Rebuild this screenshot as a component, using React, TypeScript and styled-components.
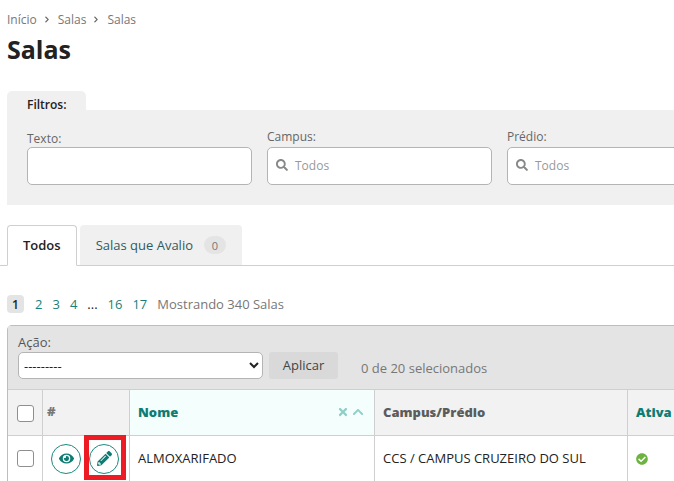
import styled, { createGlobalStyle } from 'styled-components';
import { FaCheckCircle, FaChevronRight, FaChevronUp, FaEye, FaPencilAlt, FaSearch, FaTimes } from 'react-icons/fa';

const GlobalStyle = createGlobalStyle`
  html, body {
    margin: 0;
    height: 481px;
    overflow: hidden;
    background: #fff;
  }
  *, *::before, *::after {
    box-sizing: border-box;
  }
`;

const Page = styled.div`
  width: 1000px;
  padding: 12px 0 0 7px;
  font-family: "Open Sans", sans-serif;
  font-size: 13px;
  color: #222;
`;

const Breadcrumb = styled.nav`
  display: flex;
  align-items: center;
  height: 14px;
  color: #777;
  font-size: 12px;
  svg {
    width: 6px;
    height: 7px;
    margin: 0 8px 0 7px;
    color: #666;
  }
`;

const Title = styled.h1`
  margin: 5px 0 0;
  height: 60px;
  font-size: 25px;
  line-height: 36px;
  font-weight: 700;
  color: #222;
`;

const FilterTab = styled.div`
  width: 79px;
  height: 19px;
  padding: 5px 0 0 20px;
  background: #f0f0f0;
  border-radius: 5px 5px 0 0;
  font-size: 12px;
  line-height: 17px;
  font-weight: 600;
`;

const FilterPanel = styled.div`
  display: flex;
  gap: 15px;
  height: 95px;
  padding: 19px 0 0 20px;
  background: #f0f0f0;
`;

const Field = styled.div`
  display: flex;
  flex-direction: column;
  justify-content: flex-end;
  width: 225px;
  height: 56px;
`;

const FieldLabel = styled.label<{ $low?: boolean }>`
  color: #666;
  font-size: 12px;
  line-height: 16px;
  margin-bottom: ${p => (p.$low ? 0 : 2)}px;
`;

const TextBox = styled.div`
  display: flex;
  align-items: center;
  gap: 7px;
  height: 38px;
  padding: 0 0 2px 8px;
  background: #fff;
  border: 1px solid #b4b4b4;
  border-radius: 5px;
  color: #999;
  font-size: 12px;
  svg {
    width: 12px;
    height: 12px;
    color: #888;
  }
`;

const Tabs = styled.div`
  display: flex;
  gap: 3px;
  height: 41px;
  margin: 20px 0 0 -7px;
  padding-left: 7px;
  border-bottom: 1px solid #cfcfcf;
`;

const Tab = styled.div<{ $active?: boolean }>`
  display: flex;
  align-items: center;
  gap: 11px;
  height: ${p => (p.$active ? 41 : 40)}px;
  padding: 0 ${p => (p.$active ? 15 : 16)}px ${p => (p.$active ? 2 : 0)}px;
  background: ${p => (p.$active ? '#fff' : '#f0f0f0')};
  border: ${p => (p.$active ? '1px solid #cfcfcf' : 'none')};
  border-bottom: ${p => (p.$active ? '1px solid #fff' : 'none')};
  border-radius: 4px 4px 0 0;
  color: ${p => (p.$active ? '#222' : '#33595c')};
  font-weight: ${p => (p.$active ? 600 : 400)};
  font-size: 13px;
`;

const Count = styled.span`
  display: flex;
  align-items: center;
  justify-content: center;
  width: 22px;
  height: 18px;
  background: #e4e4e4;
  border-radius: 9px;
  color: #777;
  font-size: 11px;
`;

const Pagination = styled.div`
  display: flex;
  align-items: center;
  height: 18px;
  margin-top: 29px;
  gap: 10px;
  font-size: 13px;
`;

const CurrentPage = styled.span`
  display: flex;
  align-items: center;
  justify-content: center;
  width: 17px;
  height: 18px;
  margin-right: 1px;
  background: #e4e4e4;
  border-radius: 4px;
  font-weight: 600;
  font-size: 12px;
`;

const PageLink = styled.a`
  color: #1b7f79;
`;

const Summary = styled.span`
  color: #777;
`;

const TableBox = styled.div`
  margin-top: 12px;
  border: 1px solid #bdbdbd;
  border-bottom: none;
  border-right: none;
  border-radius: 5px 0 0 0;
`;

const Toolbar = styled.div`
  display: flex;
  align-items: flex-end;
  height: 64px;
  padding: 0 0 10px 10px;
  background: #e4e4e4;
  border-bottom: 1px solid #cfcfcf;
`;

const ActionGroup = styled.div`
  display: flex;
  flex-direction: column;
  width: 245px;
`;

const ActionLabel = styled.label`
  color: #555;
  font-size: 13px;
  line-height: 16px;
  margin-bottom: 2px;
`;

const ActionSelect = styled.select`
  width: 245px;
  height: 27px;
  padding-left: 1px;
  background: #fff;
  border: 1px solid #b4b4b4;
  border-radius: 5px;
  font-family: "Open Sans", sans-serif;
  font-size: 13px;
  color: #222;
`;

const ApplyButton = styled.button`
  width: 69px;
  height: 27px;
  margin-left: 6px;
  padding: 0 0 2px;
  background: #d9d9d9;
  border: none;
  border-radius: 3px;
  font-family: "Open Sans", sans-serif;
  font-size: 13px;
  color: #444;
`;

const Selected = styled.span`
  margin: 0 0 2px 23px;
  color: #777;
  font-size: 13px;
  line-height: 18px;
`;

const Row = styled.div<{ $header?: boolean }>`
  display: grid;
  grid-template-columns: 35px 87px 245px 253px 1fr;
  height: 46px;
  background: ${p => (p.$header ? '#f2f2f2' : '#fff')};
  border-bottom: 1px solid #cfcfcf;
`;

const Cell = styled.div<{ $sorted?: boolean }>`
  display: flex;
  align-items: center;
  padding: 0 8px 2px;
  border-right: 1px solid #cfcfcf;
  background: ${p => (p.$sorted ? '#f4fefd' : 'transparent')};
`;

const CheckCell = styled(Cell)`
  justify-content: center;
  padding: 0;
`;

const ActionsCell = styled(Cell)`
  gap: 8px;
  padding: 0 0 0 8px;
`;

const Box = styled.span<{ $low?: boolean }>`
  width: 17px;
  height: 17px;
  margin-top: ${p => (p.$low ? 2 : 0)}px;
  background: #fff;
  border: 1px solid #8f8f8f;
  border-radius: 3px;
`;

const HeadText = styled.span<{ $green?: boolean }>`
  color: ${p => (p.$green ? '#0f7c73' : '#5c5c5c')};
  font-weight: 800;
  font-size: 13px;
`;

const Hash = styled(HeadText)`
  margin-left: -4px;
  margin-top: -1px;
  color: #777;
`;

const SortIcons = styled.span`
  display: flex;
  align-items: center;
  gap: 3px;
  margin-left: auto;
  margin-right: 2px;
  color: #8ecfc8;
  svg {
    width: 12px;
    height: 12px;
  }
`;

const RoundButton = styled.span`
  display: flex;
  align-items: center;
  justify-content: center;
  width: 30px;
  height: 30px;
  border: 1px solid #1b8a80;
  border-radius: 50%;
  color: #0f7c73;
  svg {
    width: 15px;
    height: 15px;
  }
`;

const Highlighted = styled.span`
  position: relative;
  &::after {
    content: '';
    position: absolute;
    top: -9px;
    left: -5px;
    width: 42px;
    height: 45px;
    border: 5px solid #ed1c24;
  }
`;

const ActiveIcon = styled(FaCheckCircle)`
  width: 12px;
  height: 12px;
  margin-top: 3px;
  color: #6cb33f;
`;

export default function App() {
  return (
    <Page>
      <GlobalStyle />
      <Breadcrumb>
        Início<FaChevronRight />Salas<FaChevronRight />Salas
      </Breadcrumb>
      <Title>Salas</Title>

      <FilterTab>Filtros:</FilterTab>
      <FilterPanel>
        <Field>
          <FieldLabel $low>Texto:</FieldLabel>
          <TextBox />
        </Field>
        <Field>
          <FieldLabel>Campus:</FieldLabel>
          <TextBox><FaSearch />Todos</TextBox>
        </Field>
        <Field>
          <FieldLabel>Prédio:</FieldLabel>
          <TextBox><FaSearch />Todos</TextBox>
        </Field>
      </FilterPanel>

      <Tabs>
        <Tab $active>Todos</Tab>
        <Tab>Salas que Avalio <Count>0</Count></Tab>
      </Tabs>

      <Pagination>
        <CurrentPage>1</CurrentPage>
        <PageLink>2</PageLink>
        <PageLink>3</PageLink>
        <PageLink>4</PageLink>
        <span>...</span>
        <PageLink>16</PageLink>
        <PageLink>17</PageLink>
        <Summary>Mostrando 340 Salas</Summary>
      </Pagination>

      <TableBox>
        <Toolbar>
          <ActionGroup>
            <ActionLabel>Ação:</ActionLabel>
            <ActionSelect>
              <option>---------</option>
            </ActionSelect>
          </ActionGroup>
          <ApplyButton>Aplicar</ApplyButton>
          <Selected>0 de 20 selecionados</Selected>
        </Toolbar>
        <Row $header>
          <CheckCell><Box $low /></CheckCell>
          <Cell><Hash>#</Hash></Cell>
          <Cell $sorted>
            <HeadText $green>Nome</HeadText>
            <SortIcons><FaTimes /><FaChevronUp /></SortIcons>
          </Cell>
          <Cell><HeadText>Campus/Prédio</HeadText></Cell>
          <Cell><HeadText $green>Ativa</HeadText></Cell>
        </Row>
        <Row>
          <CheckCell><Box /></CheckCell>
          <ActionsCell>
            <RoundButton><FaEye /></RoundButton>
            <Highlighted>
              <RoundButton><FaPencilAlt /></RoundButton>
            </Highlighted>
          </ActionsCell>
          <Cell>ALMOXARIFADO</Cell>
          <Cell>CCS / CAMPUS CRUZEIRO DO SUL</Cell>
          <Cell><ActiveIcon /></Cell>
        </Row>
      </TableBox>
    </Page>
  );
}
